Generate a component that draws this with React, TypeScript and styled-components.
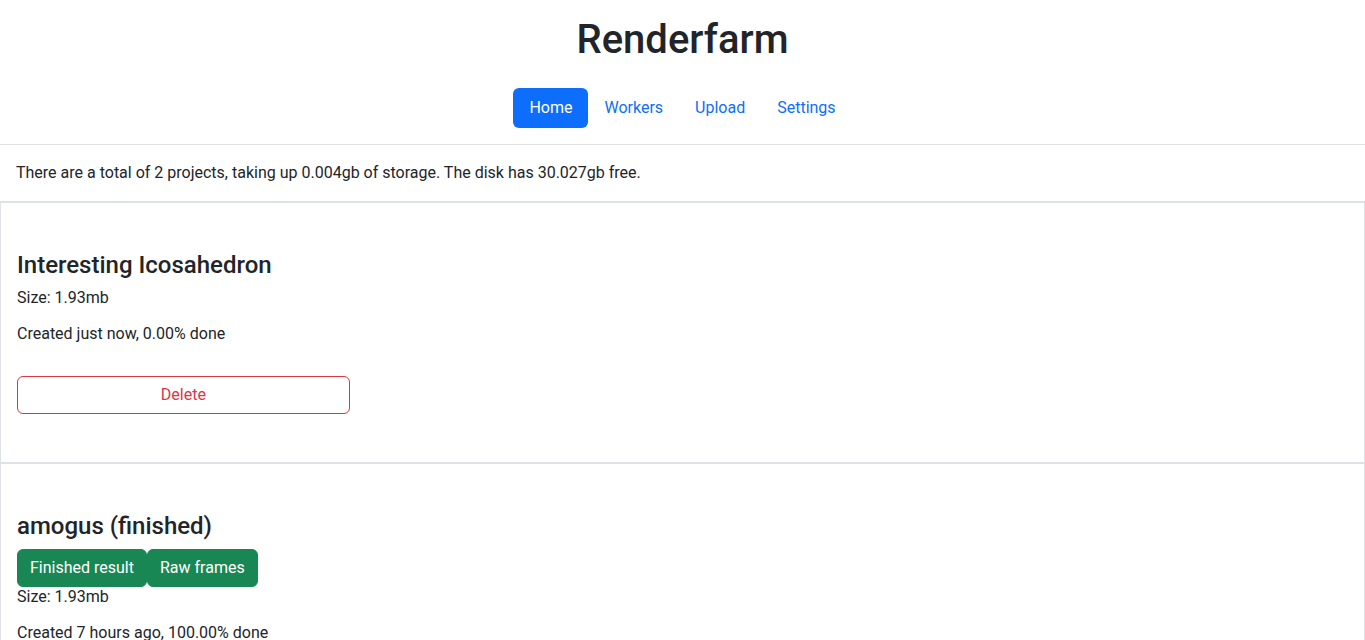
import React from "react";
import styled, { createGlobalStyle } from "styled-components";

const GlobalStyle = createGlobalStyle`
  html, body {
    margin: 0;
    padding: 0;
    background: #ffffff;
  }
  body {
    font-family: Roboto, "Liberation Sans", Arial, sans-serif;
    font-size: 16px;
    line-height: 1.5;
    color: #212529;
  }
  * { box-sizing: border-box; }
`;

const Page = styled.div`
  padding-bottom: 74px;
`;

const Header = styled.header`
  padding: 16px 0;
  text-align: center;
  border-bottom: 1px solid #dee2e6;
`;

const Title = styled.h1`
  margin: 0 0 24px;
  font-size: 40px;
  font-weight: 500;
  line-height: 1.2;
`;

const Nav = styled.nav`
  display: flex;
  justify-content: center;
`;

const NavLink = styled.a<{ $active?: boolean }>`
  display: block;
  padding: 8px 16px;
  line-height: 24px;
  border-radius: 6px;
  text-decoration: none;
  color: ${(p) => (p.$active ? "#ffffff" : "#0d6efd")};
  background: ${(p) => (p.$active ? "#0d6efd" : "transparent")};
  cursor: pointer;
`;

const Info = styled.p`
  margin: 0;
  padding: 16px;
  line-height: 24px;
  border-bottom: 1px solid #dee2e6;
`;

const Card = styled.section`
  border: 1px solid #dee2e6;
  padding: 48px 16px;
`;

const CardTitle = styled.h4`
  margin: 0 0 8px;
  font-size: 24px;
  font-weight: 500;
  line-height: 1.2;
`;

const Meta = styled.p<{ $last?: boolean }>`
  margin: 0 0 ${(p) => (p.$last ? "33px" : "17px")};
  line-height: normal;
`;

const ButtonRow = styled.div`
  display: flex;
`;

const Button = styled.button<{ $variant: "success" | "outline-danger" }>`
  font-family: inherit;
  font-size: 16px;
  line-height: 24px;
  padding: 6px 12px;
  border-radius: 6px;
  cursor: pointer;
  border: 1px solid ${(p) => (p.$variant === "success" ? "#198754" : "#dc3545")};
  background: ${(p) => (p.$variant === "success" ? "#198754" : "transparent")};
  color: ${(p) => (p.$variant === "success" ? "#ffffff" : "#dc3545")};
`;

const DeleteCol = styled.div`
  width: 25%;
  & > button {
    width: 100%;
  }
`;

type Project = {
  name: string;
  finished: boolean;
  size: string;
  created: string;
  done: string;
};

const projects: Project[] = [
  { name: "Interesting Icosahedron", finished: false, size: "1.93mb", created: "just now", done: "0.00%" },
  { name: "amogus", finished: true, size: "1.93mb", created: "7 hours ago", done: "100.00%" },
];

export default function App() {
  return (
    <Page>
      <GlobalStyle />
      <Header>
        <Title>Renderfarm</Title>
        <Nav>
          <NavLink $active>Home</NavLink>
          <NavLink>Workers</NavLink>
          <NavLink>Upload</NavLink>
          <NavLink>Settings</NavLink>
        </Nav>
      </Header>
      <Info>
        There are a total of 2 projects, taking up 0.004gb of storage. The disk has 30.027gb free.
      </Info>
      {projects.map((p) => (
        <Card key={p.name}>
          <CardTitle>
            {p.name}
            {p.finished ? " (finished)" : ""}
          </CardTitle>
          {p.finished && (
            <ButtonRow>
              <Button $variant="success">Finished result</Button>
              <Button $variant="success">Raw frames</Button>
            </ButtonRow>
          )}
          <Meta>Size: {p.size}</Meta>
          <Meta $last>
            Created {p.created}, {p.done} done
          </Meta>
          <DeleteCol>
            <Button $variant="outline-danger">Delete</Button>
          </DeleteCol>
        </Card>
      ))}
    </Page>
  );
}
